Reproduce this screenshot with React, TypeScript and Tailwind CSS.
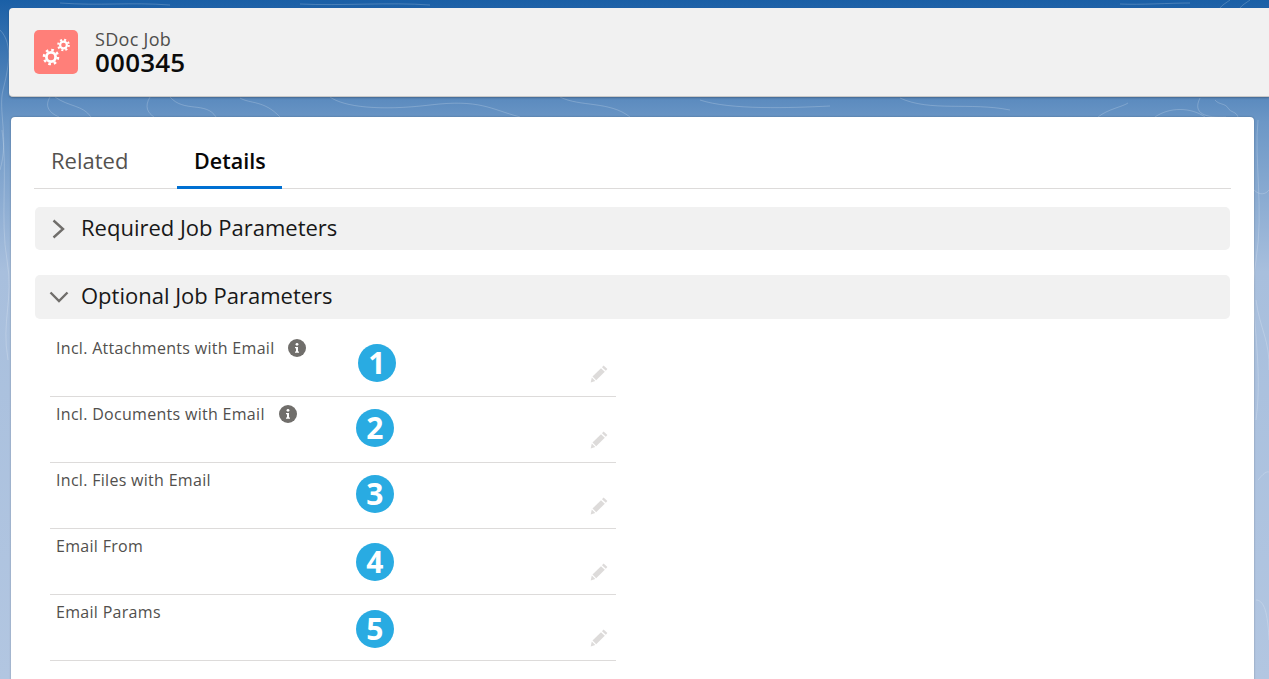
const rows = [
  { label: "Incl. Attachments with Email", info: "left-[238px]", badge: "left-[308px] top-[13px]", n: 1 },
  { label: "Incl. Documents with Email", info: "left-[229px]", badge: "left-[306px] top-[12px]", n: 2 },
  { label: "Incl. Files with Email", badge: "left-[306px] top-[12px]", n: 3 },
  { label: "Email From", badge: "left-[306px] top-[14px]", n: 4 },
  { label: "Email Params", badge: "left-[306px] top-[15px]", n: 5 },
];

function Gears() {
  return (
    <svg viewBox="0 0 44 44" className="h-[44px] w-[44px]" fill="none" stroke="#fff">
      <circle cx="17" cy="27" r="4.6" strokeWidth="2.8" />
      <circle cx="17" cy="27" r="7" strokeWidth="2.6" strokeDasharray="2.6 2.9" />
      <circle cx="29.5" cy="15" r="3.4" strokeWidth="2.2" />
      <circle cx="29.5" cy="15" r="5.3" strokeWidth="2.1" strokeDasharray="2 2.16" />
    </svg>
  );
}

function InfoDot({ className }: { className: string }) {
  return (
    <svg viewBox="0 0 18 18" className={`absolute top-[8px] h-[18px] w-[18px] ${className}`}>
      <circle cx="9" cy="9" r="9" fill="#706e6b" />
      <circle cx="9" cy="5.3" r="1.4" fill="#fff" />
      <path d="M7 8h3v4.6h1v1.2H7v-1.2h1V9.2H7z" fill="#fff" />
    </svg>
  );
}

function Pencil() {
  return (
    <svg viewBox="0 0 20 20" className="absolute right-[7px] top-[33px] h-[20px] w-[20px]" fill="#dddbda">
      <path d="M14.6 1.6l3.8 3.5-1.6 1.7-3.8-3.5z" />
      <path d="M12 4.2l3.8 3.5-8.6 8.5-3.7-3.6z" />
      <path d="M2.8 13.6l3.5 3.4-4.6 1.4z" />
    </svg>
  );
}

function Chevron({ open }: { open?: boolean }) {
  return (
    <svg viewBox="0 0 24 24" className="ml-[12px] h-[24px] w-[24px]" fill="none" stroke="#706e6b" strokeWidth="2.4">
      <path d={open ? "M3.5 7.5L12 16l8.5-8.5" : "M6.5 3.5L16 12l-9.5 8.5"} />
    </svg>
  );
}

// contour lines of the page backdrop
function Backdrop() {
  return (
    <svg viewBox="0 0 1269 679" className="absolute inset-0 h-full w-full" fill="none" stroke="#fff" strokeOpacity="0.2">
      <path d="M0 30c14 14 8 40 3 60s6 50-3 80" />
      <path d="M2 130c6 40-2 90 5 130s-6 60 1 100" />
      <path d="M50 97c-6 10 0 16 9 20M55 97c14 10 28 8 36 20" />
      <path d="M150 97c-6 10-2 16 4 20M170 97c14 16 36 4 46 20M240 98c10 6 24 2 40 19" />
      <path d="M330 97c14 10 50 14 100 8s60 4 90 12" />
      <path d="M560 97c20 10 50 4 70 20M700 100c30 10 90 8 130 6M900 98c30 14 70 4 110 12" />
      <path d="M1098 117c10-8 24-10 30-14M1155 117c14-10 36-10 50 0" />
      <path d="M1200 98c-8 16 6 20 26 19M1215 100c4 5 10 3 13 8s8 3 10 9" />
      <path d="M1258 120c-4 40 6 90-2 140s8 100 0 160" />
      <path d="M1254 190c6 6 12 4 15 0M1256 300c4 30 14 40 13 70M1258 480c8-10 10-8 11-8M1256 600c10 0 12 20 13 40" />
      <path d="M60 3c40 3 70-1 110 2M300 4c40 2 90-2 130 1M1120 4c20 1 50-1 70-1" />
      <path d="M1230 0c-4 3-8 5-10 8M1250 0c-4 3-8 5-10 8" />
    </svg>
  );
}

export default function App() {
  return (
    <div className="relative h-[679px] w-[1269px] overflow-hidden bg-[linear-gradient(to_bottom,#1a5fa6_0%,#4f82b9_12%,#6c97c6_18%,#a8bfdd_40%,#b2c6e1_100%)] font-['Open_Sans','Noto_Sans',sans-serif]">
      <Backdrop />
      <div className="relative">
        <header className="ml-[9px] mt-[8px] flex h-[89px] items-center rounded-l-[4px] border-b border-[#c9c9c9] bg-[#f1f1f1] pl-[25px] shadow-[0_1px_2px_rgba(0,0,0,0.25)]">
          <div className="rounded-[5px] bg-[#ff7f79]">
            <Gears />
          </div>
          <div className="ml-[17px]">
            <p className="text-[18px] leading-[21px] tracking-[0.3px] text-[#4f4e4c]">SDoc Job</p>
            <h1 className="text-[26px] font-semibold leading-[25px] tracking-[0.2px] text-[#0b0b0b]">000345</h1>
          </div>
        </header>

        <main className="ml-[11px] mt-[20px] h-[570px] w-[1243px] rounded-[4px] bg-white px-[23px] shadow-[0_0_2px_rgba(0,0,0,0.3)]">
          <nav className="flex h-[72px] items-end border-b border-[#dddbda] text-[22px]">
            <a className="flex h-[45px] items-center pb-[10px] pl-[17px] pr-[49px] text-[#54524f]">Related</a>
            <a className="-mb-px flex h-[45px] w-[105px] items-center justify-center border-b-[3px] border-[#0070d2] pb-[8px] text-[21.5px] font-semibold text-[#080707]">
              Details
            </a>
          </nav>

          <section className="ml-px mr-px mt-[18px] flex h-[43px] items-center rounded-[5px] bg-[#f1f1f1]">
            <Chevron />
            <h2 className="ml-[10px] pb-[2px] text-[22px] text-[#181818]">Required Job Parameters</h2>
          </section>

          <section className="ml-px mr-px mt-[25px] flex h-[44px] items-center rounded-[5px] bg-[#f1f1f1]">
            <Chevron open />
            <h2 className="ml-[10px] pb-[4px] text-[22px] text-[#181818]">Optional Job Parameters</h2>
          </section>

          <ul className="ml-[16px] mt-[12px] w-[566px]">
            {rows.map((row) => (
              <li key={row.n} className="relative h-[66px] border-b border-[#dddbda] pl-[6px] pt-[6px] text-[16px] leading-[22px] tracking-[0.3px] text-[#514f4d]">
                {row.label}
                {row.info && <InfoDot className={row.info} />}
                <span className={`absolute flex h-[38px] w-[38px] items-center justify-center rounded-full bg-[#29abe2] text-[30px] font-bold leading-none text-white ${row.badge}`}>
                  {row.n}
                </span>
                <Pencil />
              </li>
            ))}
          </ul>
        </main>
      </div>
    </div>
  );
}
